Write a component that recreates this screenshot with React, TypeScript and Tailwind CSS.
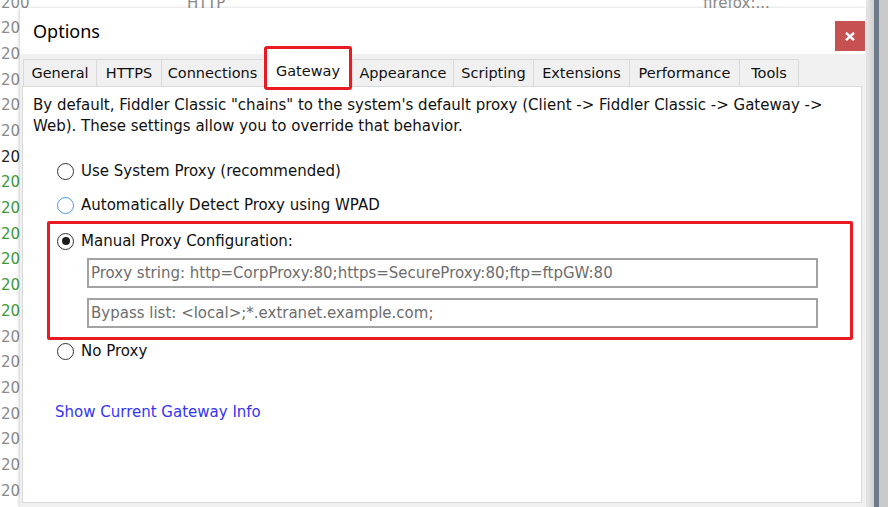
import { useState } from "react"

const listColors = [
  "text-[#8a8a8a]", "text-[#8a8a8a]", "text-[#8a8a8a]", "text-[#8a8a8a]", "text-[#8a8a8a]",
  "text-[#8a8a8a]", "text-[#1e1e1e]", "text-[#3c9a3c]", "text-[#3c9a3c]", "text-[#3c9a3c]",
  "text-[#3c9a3c]", "text-[#3c9a3c]", "text-[#3c9a3c]", "text-[#8a8a8a]", "text-[#8a8a8a]",
  "text-[#8a8a8a]", "text-[#8a8a8a]", "text-[#8a8a8a]", "text-[#8a8a8a]", "text-[#8a8a8a]",
]

const tabs = [
  { label: "General", w: "w-[73px]" },
  { label: "HTTPS", w: "w-[65px]" },
  { label: "Connections", w: "w-[102px]" },
  { label: "Gateway", w: "w-[88px]" },
  { label: "Appearance", w: "w-[101px]" },
  { label: "Scripting", w: "w-[80px]" },
  { label: "Extensions", w: "w-[96px]" },
  { label: "Performance", w: "w-[110px]" },
  { label: "Tools", w: "w-[60px]" },
]

function Radio({ checked, focus }: { checked?: boolean; focus?: boolean }) {
  return (
    <span
      className={
        "flex items-center justify-center w-[17px] h-[17px] rounded-full border-[1.5px] bg-white shrink-0 " +
        (focus ? "border-[#4a98e0]" : "border-[#333333]")
      }
    >
      {checked ? <span className="w-[8px] h-[8px] rounded-full bg-[#1c1c1c]" /> : null}
    </span>
  )
}

function RadioRow({ label, checked, focus }: { label: string; checked?: boolean; focus?: boolean }) {
  return (
    <label className="flex items-center h-[20px] gap-x-[7px] text-[#111]">
      <Radio checked={checked} focus={focus} />
      <span className="whitespace-nowrap pt-[1px]">{label}</span>
    </label>
  )
}

export default function App() {
  const [tab] = useState("Gateway")

  return (
    <div className="relative w-[888px] h-[507px] overflow-hidden bg-white font-['DejaVu_Sans',sans-serif] text-[15px]">
      {/* session list behind the dialog */}
      <div className="flex h-full">
        <div className="flex-1 flex flex-col -mt-[10px]">
          {listColors.map((c, i) => (
            <div key={i} className={"flex items-center h-[25.7px] shrink-0 pl-[1px] " + c}>
              <span className="w-[186px]">200</span>
              {i === 0 ? (
                <>
                  <span className="w-[516px]">HTTP</span>
                  <span>firefox:...</span>
                </>
              ) : null}
            </div>
          ))}
        </div>
        <div className="w-[8px] bg-gradient-to-r from-[#e9e9e9] to-[#cfcfcf]" />
        <div className="w-[5px] bg-[#6c7a8a]" />
        <div className="w-[9px] bg-[#cacaca]" />
      </div>

      {/* Options dialog */}
      <div className="absolute left-[20px] top-[8px] w-[846px] h-[499px] flex flex-col shadow-[-1px_0_3px_rgba(0,0,0,0.2)]">
        <div className="h-[46px] shrink-0 bg-white flex justify-between">
          <span className="pl-[13px] pt-[10px] font-['Noto_Sans',sans-serif] text-[18px] leading-[26px] text-black">
            Options
          </span>
          <button className="mt-[13px] mr-[1px] w-[30px] h-[30px] bg-[#c75050] flex items-center justify-center">
            <svg width="10" height="9" viewBox="0 0 10 9">
              <path d="M1 0.8 L9 8.2 M9 0.8 L1 8.2" stroke="white" strokeWidth="2.4" />
            </svg>
          </button>
        </div>

        <div className="flex-1 flex flex-col bg-[#f0f0f0] pt-[5px] pl-[2px] pr-[4px] pb-[4px]">
          <div className="flex items-end h-[27px] pl-[1px] text-[14.5px]">
            {tabs.map((t) =>
              t.label === tab ? (
                <div
                  key={t.label}
                  className={
                    t.w +
                    " relative z-10 ml-[1px] h-[44px] -mb-[4px] flex items-center justify-center pt-[7px] bg-white border-[3px] border-[#e81b23] rounded-[3px] text-[#111]"
                  }
                >
                  {t.label}
                </div>
              ) : (
                <div
                  key={t.label}
                  className={
                    t.w +
                    " h-[27px] flex items-center justify-center pt-[2px] border-t border-l border-[#d9d9d9] last:border-r text-[#111]"
                  }
                >
                  {t.label}
                </div>
              )
            )}
          </div>

          <div className="flex-1 bg-white border border-[#d9d9d9] pl-[10px] pt-[8px]">
            <p className="leading-[21px] text-[#111] whitespace-nowrap">
              By default, Fiddler Classic "chains" to the system's default proxy (Client -&gt; Fiddler Classic -&gt; Gateway -&gt;
              <br />
              Web). These settings allow you to override that behavior.
            </p>

            <div className="ml-[14px] mr-[8px] mt-[24px] flex flex-col">
              <div className="pl-[10px]">
                <RadioRow label="Use System Proxy (recommended)" />
              </div>
              <div className="pl-[10px] mt-[14px]">
                <RadioRow label="Automatically Detect Proxy using WPAD" focus />
              </div>

              <div className="mt-[6px] border-[3px] border-[#e81b23] rounded-[2px] pl-[7px] pt-[7px] pb-[9px] pr-[32px] flex flex-col">
                <RadioRow label="Manual Proxy Configuration:" checked />
                <div className="mt-[7px] ml-[30px] h-[30px] border-2 border-[#a3a3a3] flex items-center pl-[2px] pt-[1px] text-[#6d6d6d] whitespace-nowrap">
                  Proxy string: http=CorpProxy:80;https=SecureProxy:80;ftp=ftpGW:80
                </div>
                <div className="mt-[10px] ml-[30px] h-[30px] border-2 border-[#a3a3a3] flex items-center pl-[2px] pt-[1px] text-[#6d6d6d] whitespace-nowrap">
                  Bypass list: &lt;local&gt;;*.extranet.example.com;
                </div>
              </div>

              <div className="pl-[10px] mt-[1px]">
                <RadioRow label="No Proxy" />
              </div>

              <a className="pl-[8px] mt-[41px] h-[20px] flex items-center pt-[1px] text-[#3434f5] cursor-pointer">
                Show Current Gateway Info
              </a>
            </div>
          </div>
        </div>
      </div>
    </div>
  )
}
